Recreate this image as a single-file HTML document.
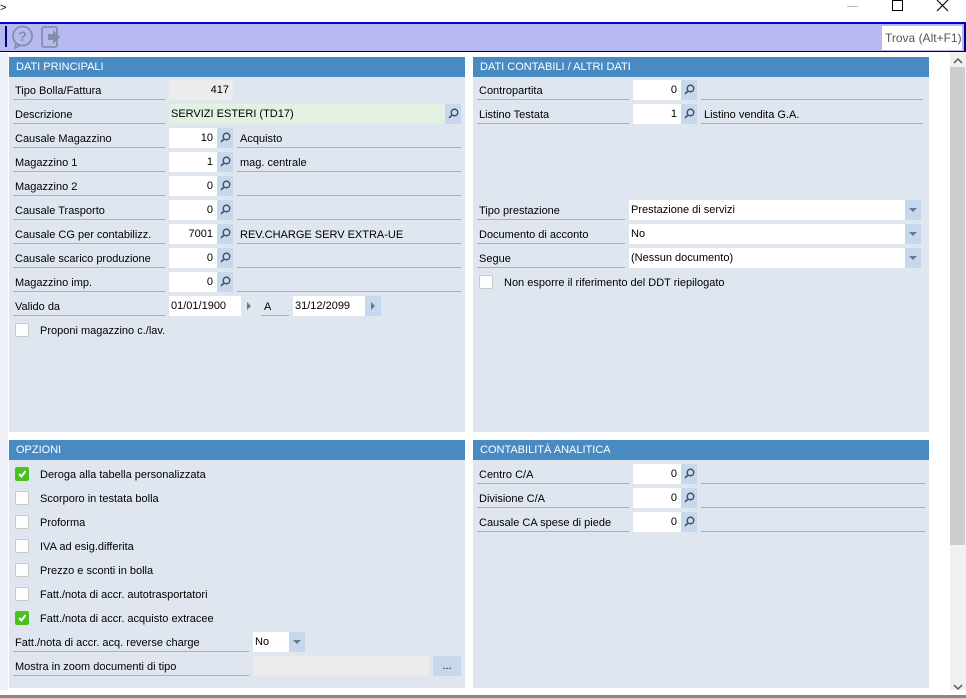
<!DOCTYPE html>
<html><head><meta charset="utf-8"><style>
*{margin:0;padding:0;box-sizing:border-box}
body{width:966px;height:698px;position:relative;overflow:hidden;background:#fff;font-family:"Liberation Sans",Tahoma,sans-serif;font-size:11px;color:#000}
.a{position:absolute}
.hdr{background:#478bc2;color:#fff;height:20px;line-height:21px;padding-left:7px;font-size:11px}
.pan{position:absolute;background:#dfe6f0}
.lbl{position:absolute;height:20px;line-height:22px;border-bottom:1px solid #9db2cc;padding-left:2px;white-space:nowrap}
.f{position:absolute;height:20px;line-height:20px;background:#fff;text-align:right;padding-right:4px}
.b{position:absolute;height:20px;width:16px;background:#c5d8ee}
.d{position:absolute;height:20px;line-height:22px;border-bottom:1px solid #9db2cc;padding-left:3px;white-space:nowrap}
.cb{position:absolute;width:14px;height:14px;background:#fff;border:1px solid #c8c8c8;border-radius:2px}
.cb.on{background:#4bc21c;border-color:#4bc21c}
.ct{position:absolute;line-height:20px;white-space:nowrap}
.sel{position:absolute;height:20px;line-height:20px;background:#fff;padding-left:2px}
.arr{position:absolute;height:20px;width:16px;background:#c5d8ee}
.arr:after{content:"";position:absolute;left:4px;top:8px;border-left:4px solid transparent;border-right:4px solid transparent;border-top:4px solid #6d7a8a}
.tri:after{content:"";position:absolute;left:6px;top:6px;border-top:4px solid transparent;border-bottom:4px solid transparent;border-left:4px solid #6d7a8a}
</style></head><body>
<div class="a" style="left:0;top:2px;font-size:11px">&gt;</div>
<div class="a" style="left:847px;top:6px;width:11px;height:1px;background:#bbb"></div>
<div class="a" style="left:892px;top:0px;width:11px;height:11px;border:1px solid #000"></div>
<svg class="a" style="left:936px;top:0" width="13" height="12"><path d="M1 0L12 11M12 0L1 11" stroke="#000" stroke-width="1.1"/></svg>
<div class="a" style="left:0;top:22px;width:966px;height:30px;background:#b9b9f2;border-top:2px solid #0000e0;border-bottom:1px solid #000040;border-right:2px solid #000080"></div>
<div class="a" style="left:5px;top:26px;width:2px;height:21px;background:#000080"></div>
<svg class="a" style="left:11px;top:25px" width="24" height="26"><circle cx="11.5" cy="11" r="9.5" fill="none" stroke="#8090a8" stroke-width="1.8"/><path d="M5 18L4 23L10 20" fill="none" stroke="#8090a8" stroke-width="1.6"/><text x="11.5" y="16" font-size="14" font-weight="bold" fill="#8090a8" text-anchor="middle" font-family="Liberation Sans">?</text></svg>
<svg class="a" style="left:41px;top:25px" width="22" height="24"><rect x="1" y="2" width="15" height="20" rx="2" fill="none" stroke="#8090a8" stroke-width="1.8"/><path d="M7 9H12V5L19 12L12 19V15H7Z" fill="#8090a8"/></svg>
<div class="a" style="left:882px;top:26px;width:80px;height:24px;background:#fff;line-height:24px;padding-left:3px;color:#555;font-size:12px">Trova (Alt+F1)</div>
<div class="a" style="left:0;top:53px;width:8px;height:637px;background:#eef0f8"></div>
<div class="a" style="left:950px;top:52px;width:16px;height:638px;background:#f0f0f0"></div>
<div class="a" style="left:950px;top:67px;width:15px;height:478px;background:#cdcdcd"></div>
<svg class="a" style="left:953px;top:57px" width="10" height="8"><path d="M1 6L5 2L9 6" fill="none" stroke="#555" stroke-width="1.5"/></svg>
<svg class="a" style="left:953px;top:683px" width="10" height="8"><path d="M1 2L5 6L9 2" fill="none" stroke="#555" stroke-width="1.5"/></svg>
<div class="a" style="left:0;top:695px;width:966px;height:3px;background:#888"></div>

<div class="pan" style="left:9px;top:57px;width:456px;height:375px"><div class="hdr">DATI PRINCIPALI</div></div>
<div class="pan" style="left:473px;top:57px;width:456px;height:375px"><div class="hdr">DATI CONTABILI / ALTRI DATI</div></div>
<div class="pan" style="left:9px;top:440px;width:456px;height:248px"><div class="hdr">OPZIONI</div></div>
<div class="pan" style="left:473px;top:440px;width:456px;height:248px"><div class="hdr">CONTABILITÀ ANALITICA</div></div>

<div class="lbl" style="left:13px;top:80px;width:152px">Tipo Bolla/Fattura</div>
<div class="f" style="left:169px;top:80px;width:64px;background:#ececec">417</div>
<div class="lbl" style="left:13px;top:104px;width:152px">Descrizione</div>
<div class="f" style="left:169px;top:104px;width:276px;background:#e2f1e0;text-align:left;padding-left:2px">SERVIZI ESTERI (TD17)</div>
<div class="b" style="left:445px;top:104px"><svg width="16" height="20"><circle cx="9.5" cy="8.5" r="3.3" fill="none" stroke="#445" stroke-width="1.3"/><path d="M7 11L4 14" stroke="#445" stroke-width="1.5"/></svg></div>

<div id="L"></div>
<script>
function row(x,y,lw,label,val,desc,fw,dw){
 var h='';
 h+='<div class="lbl" style="left:'+x+'px;top:'+y+'px;width:'+lw+'px">'+label+'</div>';
 h+='<div class="f" style="left:'+(x==13?169:633)+'px;top:'+y+'px;width:48px">'+val+'</div>';
 var bx=(x==13?217:681);
 h+='<div class="b" style="left:'+bx+'px;top:'+y+'px"><svg width="16" height="20"><circle cx="9.5" cy="8.5" r="3.3" fill="none" stroke="#445" stroke-width="1.3"/><path d="M7 11L4 14" stroke="#445" stroke-width="1.5"/></svg></div>';
 h+='<div class="d" style="left:'+(bx+20)+'px;top:'+y+'px;width:'+dw+'px">'+desc+'</div>';
 return h;
}
var s='';
var L=[['Causale Magazzino','10','Acquisto'],['Magazzino 1','1','mag. centrale'],['Magazzino 2','0',''],['Causale Trasporto','0',''],['Causale CG per contabilizz.','7001','REV.CHARGE SERV EXTRA-UE'],['Causale scarico produzione','0',''],['Magazzino imp.','0','']];
for(var i=0;i<L.length;i++)s+=row(13,128+24*i,152,L[i][0],L[i][1],L[i][2],0,224);
s+=row(477,80,152,'Contropartita','0','',0,222);
s+=row(477,104,152,'Listino Testata','1','Listino vendita G.A.',0,222);
s+=row(477,464,152,'Centro C/A','0','',0,224);
s+=row(477,488,152,'Divisione C/A','0','',0,224);
s+=row(477,512,152,'Causale CA spese di piede','0','',0,224);
var O=[[1,'Deroga alla tabella personalizzata'],[0,'Scorporo in testata bolla'],[0,'Proforma'],[0,'IVA ad esig.differita'],[0,'Prezzo e sconti in bolla'],[0,'Fatt./nota di accr. autotrasportatori'],[1,'Fatt./nota di accr. acquisto extracee']];
for(var i=0;i<O.length;i++){var y=467+24*i;
 s+='<div class="cb'+(O[i][0]?' on':'')+'" style="left:15px;top:'+y+'px">'+(O[i][0]?'<svg width="12" height="12" style="position:absolute;left:0;top:0"><path d="M3 6L5.5 8.5L9.5 3" fill="none" stroke="#fff" stroke-width="2"/></svg>':'')+'</div>';
 s+='<div class="ct" style="left:40px;top:'+(y-2)+'px">'+O[i][1]+'</div>';}
document.getElementById('L').innerHTML=s;
</script>

<div class="lbl" style="left:13px;top:296px;width:152px">Valido da</div>
<div class="f" style="left:169px;top:296px;width:72px;text-align:left;padding-left:2px">01/01/1900</div>
<div class="arr tri" style="left:241px;top:296px;background:#dfe6f0"></div>
<div class="d" style="left:261px;top:296px;width:28px">A</div>
<div class="f" style="left:293px;top:296px;width:72px;text-align:left;padding-left:2px">31/12/2099</div>
<div class="arr tri" style="left:365px;top:296px;background:#c5d8ee"></div>
<div class="cb" style="left:15px;top:323px"></div>
<div class="ct" style="left:40px;top:321px">Proponi magazzino c./lav.</div>

<div class="lbl" style="left:477px;top:200px;width:148px">Tipo prestazione</div>
<div class="sel" style="left:629px;top:200px;width:276px">Prestazione di servizi</div><div class="arr" style="left:905px;top:200px"></div>
<div class="lbl" style="left:477px;top:224px;width:148px">Documento di acconto</div>
<div class="sel" style="left:629px;top:224px;width:276px">No</div><div class="arr" style="left:905px;top:224px"></div>
<div class="lbl" style="left:477px;top:248px;width:148px">Segue</div>
<div class="sel" style="left:629px;top:248px;width:276px">(Nessun documento)</div><div class="arr" style="left:905px;top:248px"></div>
<div class="cb" style="left:479px;top:275px"></div>
<div class="ct" style="left:504px;top:273px">Non esporre il riferimento del DDT riepilogato</div>

<div class="lbl" style="left:13px;top:632px;width:236px">Fatt./nota di accr. acq. reverse charge</div>
<div class="sel" style="left:253px;top:632px;width:36px">No</div><div class="arr" style="left:289px;top:632px;background:#c5d8ee"></div>
<div class="lbl" style="left:13px;top:656px;width:236px">Mostra in zoom documenti di tipo</div>
<div class="f" style="left:253px;top:656px;width:176px;background:#ebebeb"></div>
<div class="b" style="left:433px;top:656px;width:28px;text-align:center;line-height:20px">...</div>
</body></html>
